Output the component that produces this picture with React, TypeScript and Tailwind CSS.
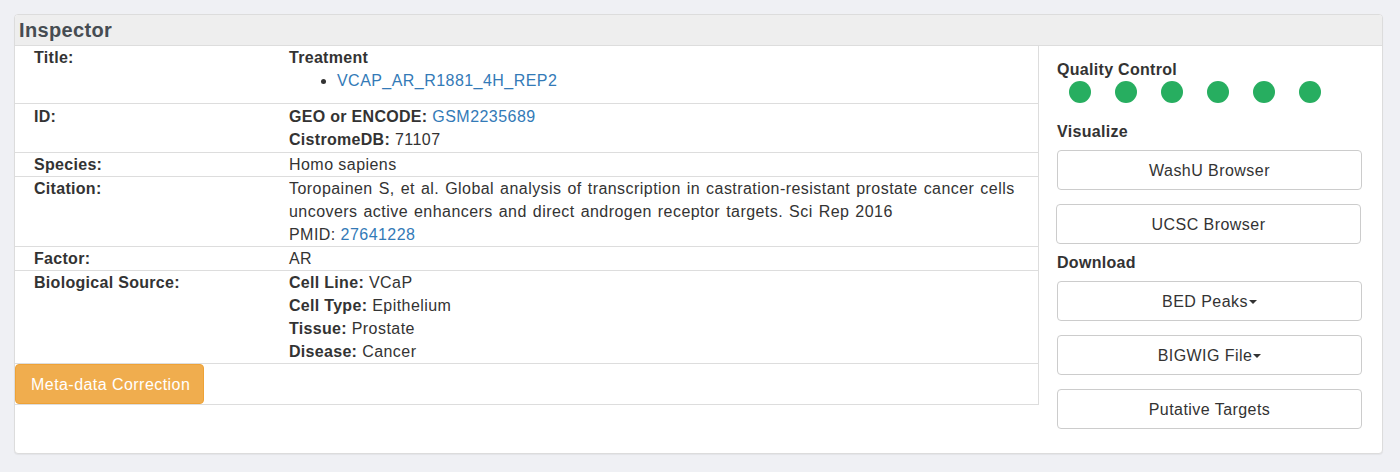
import React from "react";

const B = ({ children }: { children: React.ReactNode }) => (
  <b className="font-bold tracking-[0.3px]">{children}</b>
);

const Row = ({
  label,
  children,
  className = "",
}: {
  label: string;
  children: React.ReactNode;
  className?: string;
}) => (
  <div className={`flex border-b border-[#dddddd] ${className}`}>
    <div className="w-[274px] shrink-0 pl-[19px] font-bold tracking-[0.3px]">{label}</div>
    <div className="flex-1">{children}</div>
  </div>
);

const Btn = ({ children, caret = false, className = "" }: { children: React.ReactNode; caret?: boolean; className?: string }) => (
  <div
    className={`flex h-[40px] w-[305px] items-center justify-center rounded-[4px] border border-[#cccccc] bg-white text-[#333333] ${className}`}
  >
    <span>{children}</span>
    {caret && (
      <span className="ml-[1px] mt-[2px] inline-block h-0 w-0 border-x-[4px] border-t-[4px] border-x-transparent border-t-[#333333]" />
    )}
  </div>
);

export default function App() {
  const link = "text-[#337ab7]";
  return (
    <div
      className="min-h-[472px] w-[1400px] bg-[#eff0f4] pt-[14px] pl-[14px] text-[16px] leading-[23px] tracking-[0.45px] text-[#333333]"
      style={{ fontFamily: '"Liberation Sans", Arial, sans-serif' }}
    >
      <div className="h-[440px] w-[1369px] overflow-hidden rounded-[4px] border border-[#dcdcdc] bg-white shadow-[0_1px_1px_rgba(0,0,0,0.05)]">
        <div className="h-[31px] border-b border-[#dddddd] bg-[#eeeeee] pl-[4px] text-[20px] font-bold leading-[31px] tracking-[0.35px] text-[#464c52]">
          Inspector
        </div>
        <div className="flex items-start">
          <div className="w-[1024px] shrink-0 border-r border-[#dddddd]">
            <Row label="Title:" className="pb-[11px]">
              <div className="font-bold tracking-[0.3px]">Treatment</div>
              <ul className="list-disc pl-[48px]">
                <li>
                  <span className={link}>VCAP_AR_R1881_4H_REP2</span>
                </li>
              </ul>
            </Row>
            <Row label="ID:" className="py-[1px]">
              <div>
                <B>GEO or ENCODE:</B> <span className={link}>GSM2235689</span>
              </div>
              <div>
                <B>CistromeDB:</B> 71107
              </div>
            </Row>
            <Row label="Species:">Homo sapiens</Row>
            <Row label="Citation:">
              <div className="[word-spacing:1.1px]">
                Toropainen S, et al. Global analysis of transcription in castration-resistant prostate cancer cells
                <br />
                uncovers active enhancers and direct androgen receptor targets. Sci Rep 2016
              </div>
              <div>
                PMID: <span className={link}>27641228</span>
              </div>
            </Row>
            <Row label="Factor:">AR</Row>
            <Row label="Biological Source:">
              <div>
                <B>Cell Line:</B> VCaP
              </div>
              <div>
                <B>Cell Type:</B> Epithelium
              </div>
              <div>
                <B>Tissue:</B> Prostate
              </div>
              <div>
                <B>Disease:</B> Cancer
              </div>
            </Row>
            <div className="h-[41px] border-b border-[#dddddd]">
              <div className="flex h-[40px] w-[189px] items-center rounded-[4px] border border-[#eea236] bg-[#f0ad4e] pl-[15px] text-white">
                Meta-data Correction
              </div>
            </div>
          </div>
          <div className="flex-1 pl-[18px] pt-[12px]">
            <div className="font-bold tracking-[0.3px]">Quality Control</div>
            <div className="ml-[12px] flex gap-[24px]">
              {[0, 1, 2, 3, 4, 5].map((i) => (
                <div key={i} className="h-[22px] w-[22px] rounded-full bg-[#27ae60]" />
              ))}
            </div>
            <div className="mt-[17px] font-bold tracking-[0.3px]">Visualize</div>
            <Btn className="mt-[7px]">WashU Browser</Btn>
            <Btn className="-ml-[1px] mt-[14px]">UCSC Browser</Btn>
            <div className="mt-[7px] font-bold tracking-[0.3px]">Download</div>
            <Btn className="mt-[7px]" caret>
              BED Peaks
            </Btn>
            <Btn className="mt-[14px]" caret>
              BIGWIG File
            </Btn>
            <Btn className="mt-[14px]">Putative Targets</Btn>
          </div>
        </div>
      </div>
    </div>
  );
}
